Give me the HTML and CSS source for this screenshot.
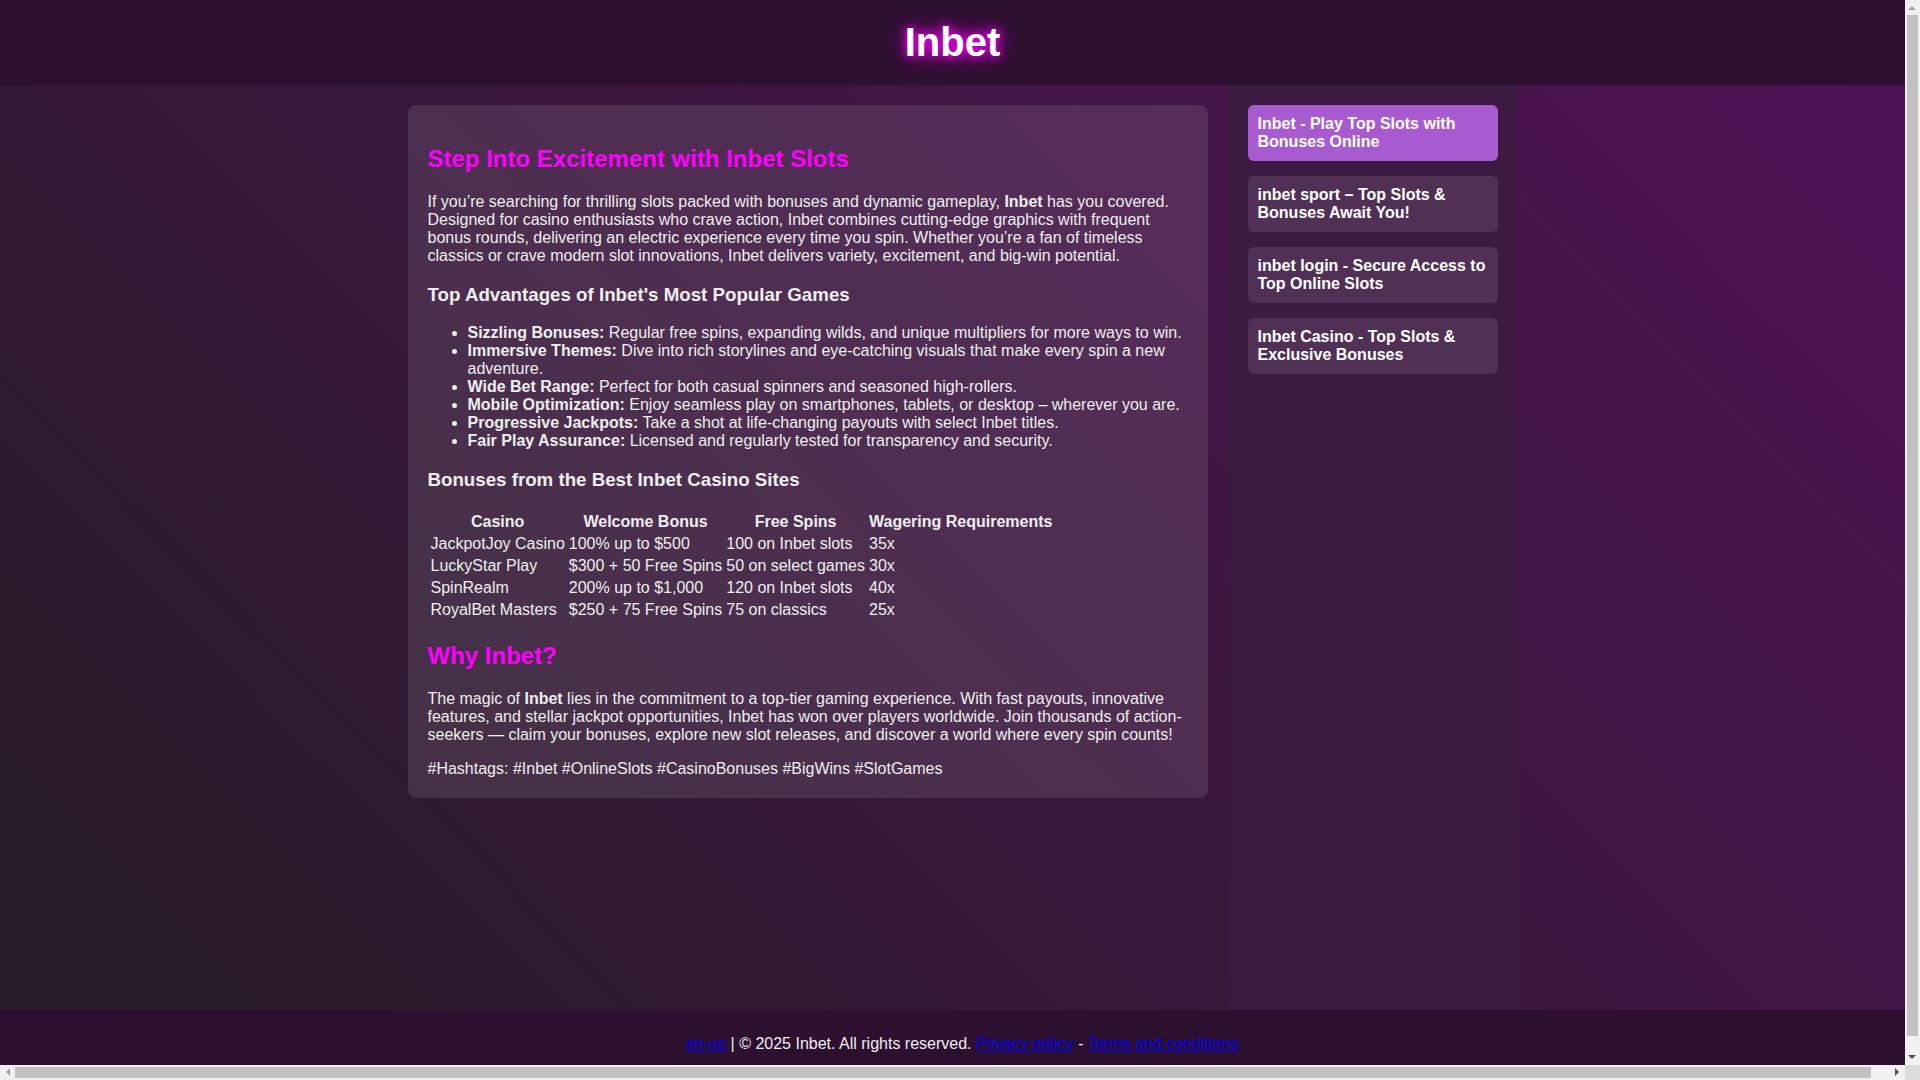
FILE: index.html
```html
<!DOCTYPE html>
<html lang="en">
<head>
<meta charset="utf-8">
<title>Inbet</title>
<link rel="stylesheet" href="styles.css">
</head>
<body>
<header class="site-header">
  <h1 class="logo">Inbet</h1>
</header>
<main class="main">
  <article class="card">
    <h2>Step Into Excitement with Inbet Slots</h2>
    <p>If you’re searching for thrilling slots packed with bonuses and dynamic gameplay, <strong>Inbet</strong> has you covered. Designed for casino enthusiasts who crave action, Inbet combines cutting-edge graphics with frequent bonus rounds, delivering an electric experience every time you spin. Whether you’re a fan of timeless classics or crave modern slot innovations, Inbet delivers variety, excitement, and big-win potential.</p>
    <h3>Top Advantages of Inbet's Most Popular Games</h3>
    <ul>
      <li><strong>Sizzling Bonuses:</strong> Regular free spins, expanding wilds, and unique multipliers for more ways to win.</li>
      <li><strong>Immersive Themes:</strong> Dive into rich storylines and eye-catching visuals that make every spin a new adventure.</li>
      <li><strong>Wide Bet Range:</strong> Perfect for both casual spinners and seasoned high-rollers.</li>
      <li><strong>Mobile Optimization:</strong> Enjoy seamless play on smartphones, tablets, or desktop – wherever you are.</li>
      <li><strong>Progressive Jackpots:</strong> Take a shot at life-changing payouts with select Inbet titles.</li>
      <li><strong>Fair Play Assurance:</strong> Licensed and regularly tested for transparency and security.</li>
    </ul>
    <h3>Bonuses from the Best Inbet Casino Sites</h3>
    <table class="bonus-table">
      <thead>
        <tr><th>Casino</th><th>Welcome Bonus</th><th>Free Spins</th><th>Wagering Requirements</th></tr>
      </thead>
      <tbody>
        <tr><td>JackpotJoy Casino</td><td>100% up to $500</td><td>100 on Inbet slots</td><td>35x</td></tr>
        <tr><td>LuckyStar Play</td><td>$300 + 50 Free Spins</td><td>50 on select games</td><td>30x</td></tr>
        <tr><td>SpinRealm</td><td>200% up to $1,000</td><td>120 on Inbet slots</td><td>40x</td></tr>
        <tr><td>RoyalBet Masters</td><td>$250 + 75 Free Spins</td><td>75 on classics</td><td>25x</td></tr>
      </tbody>
    </table>
    <h2>Why Inbet?</h2>
    <p>The magic of <strong>Inbet</strong> lies in the commitment to a top-tier gaming experience. With fast payouts, innovative features, and stellar jackpot opportunities, Inbet has won over players worldwide. Join thousands of action-seekers — claim your bonuses, explore new slot releases, and discover a world where every spin counts!</p>
    <p>#Hashtags: #Inbet #OnlineSlots #CasinoBonuses #BigWins #SlotGames</p>
  </article>
  <aside class="sidebar">
    <a class="side-link active" href="#">Inbet - Play Top Slots with Bonuses Online</a>
    <a class="side-link" href="#">inbet sport – Top Slots &amp; Bonuses Await You!</a>
    <a class="side-link" href="#">inbet login - Secure Access to Top Online Slots</a>
    <a class="side-link" href="#">Inbet Casino - Top Slots &amp; Exclusive Bonuses</a>
  </aside>
</main>
<footer class="site-footer">
  <a href="#">en-us</a> | © 2025 Inbet. All rights reserved. <a href="#">Privacy policy</a> - <a href="#">Terms and conditions</a>
</footer>
<div class="sb-v" aria-hidden="true">
  <span class="sb-arrow sb-up"></span>
  <span class="sb-v-thumb"></span>
  <span class="sb-arrow sb-down"></span>
</div>
<div class="sb-h" aria-hidden="true">
  <span class="sb-arrow sb-left"></span>
  <span class="sb-h-thumb"></span>
  <span class="sb-arrow sb-right"></span>
</div>
<div class="sb-corner" aria-hidden="true"></div>
</body>
</html>
```
FILE: styles.css
```css
html {
  margin: 0;
  padding: 0;
  background: #2d0f2f;
}

body {
  margin: 0 15px 0 0;
  min-height: 100vh;
  display: flex;
  flex-direction: column;
  font-family: "Liberation Sans", Arial, sans-serif;
  font-size: 16px;
  color: #eeeeee;
  background: #2d0f2f;
}

.site-header {
  background: #2d0f2f;
  padding: 20px;
  text-align: center;
}

.logo {
  margin: 0;
  font-size: 40px;
  font-weight: bold;
  color: #ffffff;
  text-shadow: 0 0 10px #ff00ff, 0 0 20px #ff00ff;
}

.main {
  flex: 1;
  width: 100%;
  padding: 0 10px;
  box-sizing: content-box;
  display: flex;
  justify-content: center;
  gap: 20px;
  background: linear-gradient(45deg, #271c27, #4e1254);
}

.card {
  width: 800px;
  flex-shrink: 0;
  align-self: flex-start;
  box-sizing: border-box;
  margin: 20px 0;
  padding: 20px;
  background: rgba(255, 255, 255, 0.1);
  border-radius: 8px;
}

.card h2 {
  color: #ff00ff;
  font-size: 24px;
}

.card h3 {
  color: #eeeeee;
}

.card p:last-child {
  margin-bottom: 0;
}

.sidebar {
  width: 290px;
  flex-shrink: 0;
  box-sizing: border-box;
  padding: 20px;
  background: #3d1a42;
}

.side-link {
  display: block;
  padding: 10px;
  margin-bottom: 15px;
  border-radius: 6px;
  background: rgba(255, 255, 255, 0.1);
  color: #ffffff;
  font-weight: bold;
  text-decoration: none;
}

.side-link.active {
  background: #a85bd0;
}

.site-footer {
  width: 100%;
  box-sizing: content-box;
  padding: 25px 10px 27px;
  background: #2d0f2f;
  text-align: center;
  color: #eeeeee;
}

/* imitation of the browser's classic scrollbars seen in the capture */
.sb-v {
  position: fixed;
  top: 0;
  right: 0;
  width: 15px;
  height: 1065px;
  background: #f1f1f1;
}

.sb-v-thumb {
  position: absolute;
  left: 2px;
  top: 15px;
  width: 11px;
  height: 1021px;
  background: #c1c1c1;
}

.sb-h {
  position: fixed;
  left: 0;
  bottom: 0;
  width: 1905px;
  height: 15px;
  background: #f1f1f1;
}

.sb-h-thumb {
  position: absolute;
  top: 2px;
  left: 15px;
  width: 1856px;
  height: 11px;
  background: #c1c1c1;
}

.sb-corner {
  position: fixed;
  right: 0;
  bottom: 0;
  width: 15px;
  height: 15px;
  background: #dcdcdc;
}

.sb-arrow {
  position: absolute;
  width: 0;
  height: 0;
  border: 4px solid transparent;
}

.sb-up {
  left: 3px;
  top: 2px;
  border-bottom-color: #a3a3a3;
}

.sb-down {
  left: 3px;
  bottom: 2px;
  border-top-color: #505050;
}

.sb-left {
  left: 2px;
  top: 3px;
  border-right-color: #a3a3a3;
}

.sb-right {
  right: 2px;
  top: 3px;
  border-left-color: #505050;
}
```
